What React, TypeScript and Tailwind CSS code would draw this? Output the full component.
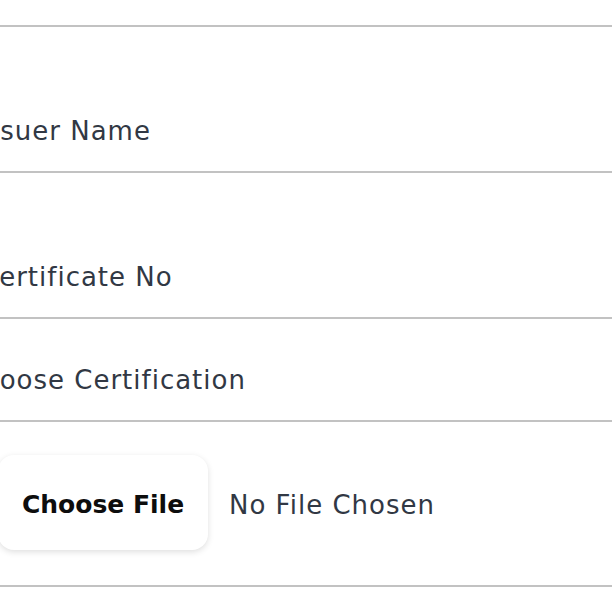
const font = { fontFamily: '"DejaVu Sans", "Noto Sans", sans-serif' };

function Field({
  label,
  offset,
  height,
}: {
  label: string;
  offset: string;
  height: string;
}) {
  return (
    <div
      className={`flex items-end border-b-2 border-[#c2c2c2] pb-[24px] ${height}`}
    >
      <span
        className={`block whitespace-nowrap text-[26px] leading-[32px] tracking-[1px] text-[#313844] ${offset}`}
      >
        {label}
      </span>
    </div>
  );
}

export default function App() {
  return (
    <div className="h-[612px] w-[612px] overflow-hidden bg-white" style={font}>
      <div className="h-[27px] border-b-2 border-[#c2c2c2]" />
      <Field label="Issuer Name" offset="-ml-[23px]" height="h-[146px]" />
      <Field label="Certificate No" offset="-ml-[20px]" height="h-[146px]" />
      <Field
        label="Choose Certification"
        offset="-ml-[37px]"
        height="h-[103px]"
      />
      <div className="flex items-center gap-[21px] border-b-2 border-[#c2c2c2] pb-[35px] pt-[33px]">
        <button
          type="button"
          className="-ml-[2px] flex h-[95px] w-[210px] items-center justify-center rounded-[16px] bg-white pt-[5px] text-[25px] font-bold text-[#0d0d0d] shadow-[0_2px_6px_rgba(0,0,0,0.13)]"
        >
          Choose File
        </button>
        <span className="pt-[5px] text-[26px] tracking-[1px] text-[#313844]">
          No File Chosen
        </span>
      </div>
    </div>
  );
}
